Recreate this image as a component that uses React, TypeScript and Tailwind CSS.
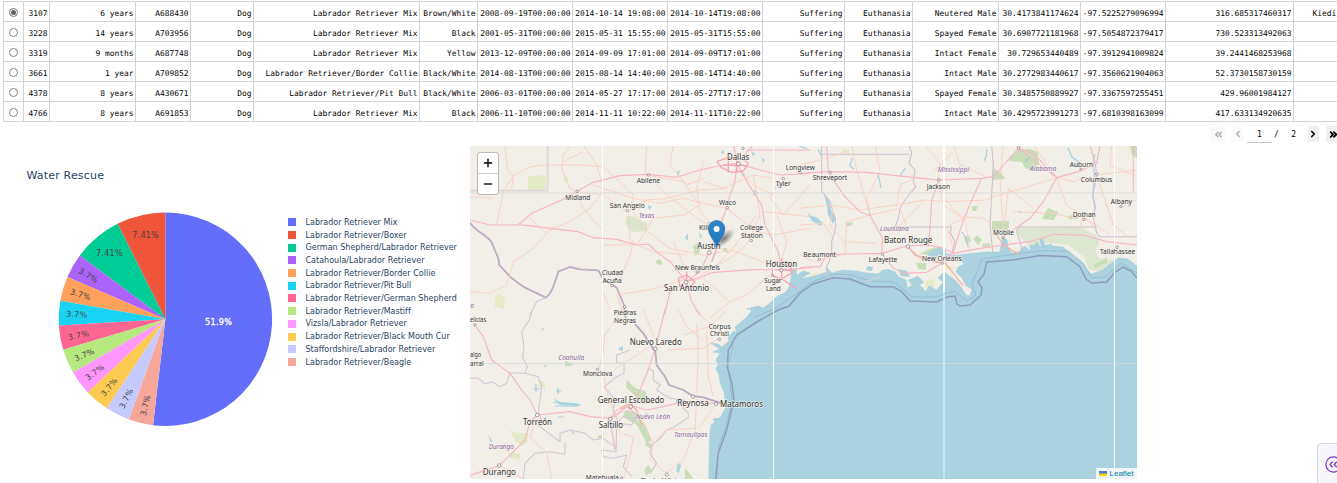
import React from "react";
import { ChevronLeft, ChevronRight, ChevronsLeft, ChevronsRight } from "lucide-react";

const ROWS: string[][] = [
  ["3107", "6 years", "A688430", "Dog", "Labrador Retriever Mix", "Brown/White", "2008-09-19T00:00:00", "2014-10-14 19:08:00", "2014-10-14T19:08:00", "Suffering", "Euthanasia", "Neutered Male", "30.4173841174624", "-97.5225279096994", "316.685317460317"],
  ["3228", "14 years", "A703956", "Dog", "Labrador Retriever Mix", "Black", "2001-05-31T00:00:00", "2015-05-31 15:55:00", "2015-05-31T15:55:00", "Suffering", "Euthanasia", "Spayed Female", "30.6907721181968", "-97.5054872379417", "730.523313492063"],
  ["3319", "9 months", "A687748", "Dog", "Labrador Retriever Mix", "Yellow", "2013-12-09T00:00:00", "2014-09-09 17:01:00", "2014-09-09T17:01:00", "Suffering", "Euthanasia", "Intact Female", "30.729653440489", "-97.3912941009824", "39.2441468253968"],
  ["3661", "1 year", "A709852", "Dog", "Labrador Retriever/Border Collie", "Black/White", "2014-08-13T00:00:00", "2015-08-14 14:40:00", "2015-08-14T14:40:00", "Suffering", "Euthanasia", "Intact Male", "30.2772983440617", "-97.3560621904063", "52.3730158730159"],
  ["4378", "8 years", "A430671", "Dog", "Labrador Retriever/Pit Bull", "Black/White", "2006-03-01T00:00:00", "2014-05-27 17:17:00", "2014-05-27T17:17:00", "Suffering", "Euthanasia", "Spayed Female", "30.3485750889927", "-97.3367597255451", "429.96001984127"],
  ["4766", "8 years", "A691853", "Dog", "Labrador Retriever Mix", "Black", "2006-11-10T00:00:00", "2014-11-11 10:22:00", "2014-11-11T10:22:00", "Suffering", "Euthanasia", "Intact Male", "30.4295723991273", "-97.6810398163099", "417.633134920635"],
];

type Slice = { name: string; color: string; share: number; label: string; x: number; y: number; rot: number };

const SLICES: Slice[] = [
  { name: "Labrador Retriever Mix", color: "#636efa", share: 14, label: "51.9%", x: 218.5, y: 322, rot: 0 },
  { name: "Labrador Retriever/Boxer", color: "#ef553b", share: 2, label: "7.41%", x: 145.5, y: 235.2, rot: 0 },
  { name: "German Shepherd/Labrador Retriever", color: "#00cc96", share: 2, label: "7.41%", x: 109.3, y: 253, rot: 0 },
  { name: "Catahoula/Labrador Retriever", color: "#ab63fa", share: 1, label: "3.7%", x: 88.2, y: 275.2, rot: 30 },
  { name: "Labrador Retriever/Border Collie", color: "#ffa15a", share: 1, label: "3.7%", x: 80.3, y: 294.3, rot: 16.7 },
  { name: "Labrador Retriever/Pit Bull", color: "#19d3f3", share: 1, label: "3.7%", x: 76.7, y: 314.2, rot: 3.3 },
  { name: "Labrador Retriever/German Shepherd", color: "#ff6692", share: 1, label: "3.7%", x: 78.3, y: 335.2, rot: -10 },
  { name: "Labrador Retriever/Mastiff", color: "#b6e880", share: 1, label: "3.7%", x: 84.3, y: 354.6, rot: -23.3 },
  { name: "Vizsla/Labrador Retriever", color: "#ff97ff", share: 1, label: "3.7%", x: 94.7, y: 372.2, rot: -36.7 },
  { name: "Labrador Retriever/Black Mouth Cur", color: "#fecb52", share: 1, label: "3.7%", x: 109, y: 387, rot: -50 },
  { name: "Staffordshire/Labrador Retriever", color: "#c5caff", share: 1, label: "3.7%", x: 126, y: 398.5, rot: -63.3 },
  { name: "Labrador Retriever/Beagle", color: "#f6a799", share: 1, label: "3.7%", x: 145.3, y: 405.3, rot: -76.7 },
];

const CX = 165.4;
const CY = 319.2;
const R = 106.7;

function wedge(from: number, to: number) {
  const p = (t: number) => {
    const a = (t / 27) * Math.PI * 2;
    return `${CX + R * Math.sin(a)} ${CY - R * Math.cos(a)}`;
  };
  return `M${CX} ${CY}L${p(from)}A${R} ${R} 0 ${to - from > 13.5 ? 1 : 0} 1 ${p(to)}Z`;
}

function Pie() {
  let edge = 27;
  return (
    <svg className="block h-[337px] w-[280px] shrink-0" viewBox="0 146 280 337" fontFamily="'DejaVu Sans', sans-serif">
      {SLICES.map((s, i) => {
        let d = "";
        if (i === 0) d = wedge(0, 14);
        else {
          d = wedge(edge - s.share, edge);
          edge -= s.share;
        }
        return <path key={s.name} d={d} fill={s.color} />;
      })}
      {SLICES.map((s, i) => {
        const w = i === 0 ? 26.8 : i < 3 ? 26.4 : 21;
        return (
          <text
            key={s.name}
            transform={`translate(${s.x} ${s.y}) rotate(${s.rot})`}
            x={-w / 2}
            y={2.9}
            fontSize="8"
            textLength={w}
            fill={i === 0 ? "#fff" : "#444"}
            stroke={i === 0 ? "#fff" : "none"}
            strokeWidth="0.3"
          >
            {s.label}
          </text>
        );
      })}
    </svg>
  );
}

type Place = [string, number, number, number, ("L" | "S" | "I")?];

const PLACES: Place[] = [
  ["Dallas", 727, 749.3, 160, "L"], ["Abilene", 636.7, 660, 182.5], ["Midland", 565.3, 590.3, 199.5],
  ["San Angelo", 609.7, 644.7, 208], ["Texas", 638.7, 654.3, 218, "I"], ["Waco", 719, 736, 205],
  ["Killeen", 699, 721, 230], ["College", 740, 763.3, 230], ["Station", 741, 762.7, 237.8],
  ["Austin", 697.3, 720.7, 249, "L"], ["New Braunfels", 675, 720, 269.8], ["San Antonio", 664, 709, 291.4, "L"],
  ["Houston", 765.7, 797, 267, "L"], ["Sugar", 764.3, 781.7, 283.3], ["Land", 766, 780.7, 290.8],
  ["Ciudad", 602, 623, 274.8], ["Acuña", 602.7, 621.7, 282.8], ["Piedras", 613.7, 636.3, 314.6],
  ["Negras", 614, 636, 322.6], ["Tyler", 775.7, 790.7, 186], ["Longview", 785.7, 815, 170.4],
  ["Shreveport", 812.7, 847.3, 180.4], ["Jackson", 926.7, 950, 188.8], ["Mississippi", 937.7, 969, 171.8, "I"],
  ["Alabama", 1030, 1056.3, 171.4, "I"], ["Auburn", 1069.7, 1093, 166.6], ["Columbus", 1080.7, 1112.3, 182.4],
  ["Albany", 1110.7, 1132, 204], ["Dothan", 1072.7, 1095.7, 216.5], ["Mobile", 993, 1014, 235.4],
  ["Louisiana", 880, 908.7, 231, "I"], ["Baton Rouge", 884, 932.3, 243, "L"], ["Lafayette", 868.7, 897.3, 262],
  ["New Orleans", 922, 961.7, 261], ["Beaumont", 803.3, 836, 256.6], ["Tallahassee", 1100, 1135.3, 254],
  ["elicias", 470, 486.3, 322.2], ["algo", 470, 481, 357.3], ["arral", 470, 483.5, 365.5],
  ["o", 470.2, 474, 308, "I"], ["Coahuila", 558.3, 584.3, 359.8, "I"], ["Monclova", 583, 612.3, 376.4],
  ["Nuevo Laredo", 629.7, 681.7, 345.2, "L"], ["Corpus", 708.7, 730.7, 328.8], ["Christi", 710, 729, 336.4],
  ["General Escobedo", 597.7, 664.3, 402.8, "L"], ["Reynosa", 677.3, 708.7, 406.2, "L"],
  ["Matamoros", 720, 763, 406.6, "L"], ["Nuevo León", 635.7, 670, 419, "I"], ["Saltillo", 598.7, 623, 428.4, "L"],
  ["Torreón", 523, 552, 424.6, "L"], ["Tamaulipas", 674, 707.3, 437, "I"], ["Durango", 488.7, 514, 448.6, "I"],
  ["Durango", 482.7, 516, 475, "L"], ["Matehuala", 585.7, 618.7, 480.4], ["Ciudad Victoria", 640, 690, 483],
];

const DOTS: [number, number, number][] = [
  [738.5, 163.8, 2], [648.5, 174.8, 1.4], [577.3, 191.3, 1.4], [627.3, 210.5, 1.4], [727.3, 207.7, 1.4],
  [709.5, 223.5, 1.4], [751.3, 240.5, 1.3], [709.3, 252.7, 2], [697.3, 272, 1.4], [686, 282.3, 2],
  [781.3, 270.3, 1.8], [773, 275.5, 1.2], [611.8, 285.5, 1.4], [624.7, 306.7, 1.4], [783.3, 178.6, 1.4],
  [800.3, 172.6, 1.4], [830.3, 172.3, 1.4], [938.7, 179.8, 1.4], [1018.5, 147.8, 1.4], [1081, 169.3, 1.3],
  [1096.7, 174, 1.4], [1121, 206.6, 1.3], [1084, 219.3, 1.4], [1003, 237.8, 1.3], [908, 246.5, 2],
  [882.5, 254.4, 1.3], [942.3, 263.2, 1.3], [819.3, 259.2, 1.4], [1117, 247.3, 1.4], [475, 325, 1.3],
  [597.5, 369.4, 1.3], [655.3, 348.8, 2], [719.3, 339.4, 1.3], [630.7, 406.7, 2], [693, 396.5, 1.8],
  [716.3, 404, 1.8], [610.3, 419, 2], [537.3, 415, 2], [499.3, 465.6, 2], [666.8, 474.7, 1.8], [743, 148.5, 1.3],
  [621.5, 478, 1.2],
];

const COAST =
  "M708.7 479L709.3 452 710 432 711 425 715 422 713 419 720 418 726 407 724 392 720 382 719 375 716 369 718 365 716 360 720 353 713 352 720 349 711 343 718 344 722 347 729 341 728 337 734 331 737 333 735 327 742 321 747 317 752 310 747 309 758 306 763 308 769 304 778 296 786 292 789 287 791 279 791 270 796 269 797 275 803 271 810 273 800 279 815 276 827 272 826 267 832 273 843 270 856 271 867 273 878 274 883 270 892 271 899 277 906 280 907 288 915 284 922 287 926 292 929 286 937 290 943 282 938 278 944 272 955 280 961 287 966 295 970 296 972 289 966 286 962 278 956 272 958 267 964 264 960 260 956 257 946 256 942 252 953 256 966 254 987 252 1000 252 1001 245 1003 237 1007 240 1008 248 1012 253 1019 252 1024 246 1030 250 1037 242 1040 247 1053 246 1063 247 1073 256 1083 263 1087 270 1091 274 1103 270 1110 264 1119 258 1128 259 1137 266V479Z";

function TexasMap() {
  return (
    <svg className="block h-full w-full" viewBox="470 146 667 333" fontFamily="'Noto Sans', sans-serif">
      <defs>
        <linearGradient id="pin" x1="0" x2="0" y1="0" y2="1">
          <stop offset="0" stopColor="#2e86cc" />
          <stop offset="1" stopColor="#2474b4" />
        </linearGradient>
        <radialGradient id="shade">
          <stop offset="0" stopColor="#000" stopOpacity=".5" />
          <stop offset="1" stopColor="#000" stopOpacity="0" />
        </radialGradient>
      </defs>
      <rect x="470" y="146" width="667" height="333" fill="#f2efe9" />

      {/* forests and parks */}
      <g fill="#b7d7a5" opacity=".7">
        <path d="M1010 158l8-8 12-1 8 3 1 11-5 8-9-3-3-6-12-1zM993 168l8 5 4 6-13 1zM992 221h17v7l-4 4-13-2zM1048 208l10 4-4 8-12-1zM1070 215l9 2-2 2h-9zM972 206l6 0-2 5h-4zM1130 146h7v12l-5-3zM964 237l5-2 2 6-5 2zM973 239l4-4 5 5-4 5zM982 244l8-1v5l-7-1zM916 263l10 0 0 7-8-1zM932 248l9-1-2 7-4 7-6-6-10-1zM627 380l8 8 10 3 4 9-4 4-10-8-9-9zM625 410l12 3 9 13 6 15-6 1-9-17-14-8zM644 470l4-5 4 5-6 6zM685 468l5 6 4 6h-9zM655 261l5-2 3 5-5 1zM1093 265l9-4 5-4 0 6-12 5zM565 361l8 3-2 2h-6zM693 246l7-4 0 10-5 4zM723 248l4 0 1 5-5-2zM598 436l4-1 0 4-4 0zM645 440l6 4 1 5-6-3zM846 223l7-1-2 4-4 0z" />
        <path d="M627 216l9 1 7 5 4 0v9l-16 1-6-9z" opacity=".6" />
        <path d="M1018 228l62-1 16 8 3 8-4 7 4 8 12 2 7-3 6 4-21 10-14-1-5-13-16-12-19-2-19 4-8-8-5-7z" opacity=".5" />
      </g>
      <g fill="#dfe8b4" opacity=".65">
        <path d="M528 175l6 1 12-1v15h-18zM495 296l5-3 5 6-1 10-9-2zM510 430l8 3 10 0 0 8-5 5-8-4zM508 452l12 2 0 6-10-2zM563 177l4-1 2 6-5 0z" />
        <path d="M930 279l5 1-1 8-8 3-1-9zM942 262l8 5 7 0-10 4zM808 275l12-3-5 4zM843 148l7 2-1 5-6-2zM540 380l5 2v8l-6-3z" />
      </g>

      {/* sea */}
      <path d={COAST} fill="#aad3df" stroke="#9fc9da" strokeWidth=".5" />
      <path d="M733 344L728 366 730 383 732 400 727 424 719 446 715 479" fill="none" stroke="#94bdcf" strokeWidth="1" />
      <path d="M755 317L774 309 793 296 812 282 833 274 851 275 871 281 894 282 912 297 936 297 955 291 967 301 976 295 972 284 982 259 1008 255 1040 251 1068 251 1083 263 1092 278 1105 277 1121 263 1137 273" fill="none" stroke="#8fb8cd" strokeWidth=".8" />
      <g fill="#aad3df">
        <path d="M930 252l9-5 7 4 0 6-8-2-4 4-7-4zM824 194l5 7 2 9 5 8-3 6-5-9-1-9zM807 212l4 4 5 1 7 6-2 3-9-5zM868 266l5 1-1 4-6-1zM880 271l8-2 8 3 2 5-10-1zM898 269l9 2 3 6-9-1zM1029 245l12 1-2-8 4 1 2 6 7-1v4l-22 1zM908 280l10-4 6 6-9 8zM777 183l1 6 4-3zM754 190l-1 6 6-3zM699 232l1 6 2-1zM688 233l-3 5 3 3zM676 399l5-1 0 4-5 1zM619 348l4-2 0 5-4-1zM553 398l7 4 12 1 8 1v2l-20-1zM645 412l2 6 2-3zM678 463l3 2-2 8-3-2zM488 435l4 6-1 2zM678 177l-1-5 3-2zM762 158l3 2-2 3zM751 151l2 5 2-2zM741 172l4 2-2 3zM723 149l-2 4 3 1zM648 205l4 2-3 3z" />
      </g>
      <g stroke="#9ccce0" strokeWidth="1.2" fill="none" opacity=".9">
        <path d="M536 384v8M534 389h6M558 388v6M556 391h5M553 402l8 1 16 1M555 406h22M558 417h6M544 366h3M543 328v2M597 400h4M571 430l3 4M799 146l8 3M818 149l4 8M852 158l-2 8 4 3M871 216l-3-8M878 174l3 14M905 168l-5 8M1068 148l4 9 7 5M1095 154l-2 10 2 16M1094 180l-1 17 3 12M984 161l2-4 1-8M1030 157l-5 5M962 232l4 6 2 9M1018 211l4 2" />
      </g>

      {/* state and national borders */}
      <g transform="translate(470 145) scale(.33333)" fill="none" stroke="#cdbdd0" strokeWidth="4" strokeLinejoin="round">
        <path d="M233 0V137H0" stroke="#dcd6d9" strokeWidth="5" />
        <path d="M0 233C20 262 48 268 65 292L85 340 88 360 125 400 158 424 190 440 228 458 240 445 250 425 265 380 300 366 330 373 385 376 400 402 440 428 462 480 467 520" stroke="#bfabc4" strokeWidth="5.5" />
        <path d="M228 458L200 470 180 510" strokeWidth="3" />
      </g>
      <g transform="translate(470 310) scale(.33333)" fill="none" stroke="#d2c5d5" strokeWidth="3.2" strokeLinejoin="round">
        <path d="M495 42L520 70 535 95 556 125 560 165 585 200 597 225 640 240 668 258 700 262 740 275 770 285" stroke="#b9a8c0" strokeWidth="5.5" />
        <path d="M186 0L178 30 155 65 162 110 158 140 172 170 165 190 205 200 215 230 205 310 215 330M165 190L120 188 110 220 90 230 65 215 45 222 25 205 0 205M190 335L230 365 270 395 270 370 300 360 345 370 370 390 400 385 420 400 438 412M160 507L165 460 195 430 240 425 285 433 285 398M480 120L440 135 440 158 462 160 462 190 440 200 403 230 435 270 430 300 445 340 485 345 495 325 460 320 440 340 438 425 395 420 400 440 430 445 470 435 460 470 485 500M533 175L550 182 550 210 570 225 560 240 600 265 640 270 640 295 655 310 655 322 615 350 590 360 570 385 545 405 540 430 560 460 540 490" />
      </g>
      <g transform="translate(800 145) scale(.33333)" fill="none" stroke="#cdbfd1" strokeWidth="3.2" strokeLinejoin="round">
        <path d="M65 0V138L90 170 106 225 108 245 95 290 95 330 80 365 85 400M65 28H328M327 0L335 25 327 55 345 75 340 110 347 125 315 165 300 190 295 220 286 244 300 246H455L450 262 465 290 457 320 472 350M575 0L580 60 570 240 578 320M668 325L660 290 650 260 655 246H885L890 262 897 275H1011M870 0L885 50 890 90 885 120 878 150 885 190 880 220 890 262" />
      </g>

      {/* minor roads */}
      <g transform="translate(470 145) scale(.33333)" fill="none" stroke="#fbcdbd" strokeWidth="2.6" strokeLinejoin="round">
        <path d="M105 0L112 75 130 92 180 66 225 60 340 60 398 65M130 92L100 140 80 240M0 155L70 160M130 92L125 130M275 70L300 130 320 140 340 190 400 260M275 70L280 30 300 0M398 65L450 110 490 150 480 200M340 0L380 60 398 120M320 140L400 150 470 200 530 165 590 160 690 135 770 130M370 120L490 160 570 175 640 160 700 175 770 190M525 90L530 0M530 90L610 165 690 225 740 255M490 200L520 250 600 310 700 330 760 320M475 200L480 290 550 320 650 330M398 140L360 190 300 230 225 262 170 210M255 240L190 310 130 350 110 420 60 445 0 440M398 300L500 300 550 220 640 210 690 180M610 0L600 60 650 120 700 100M700 50L680 130 690 200 720 230M770 190L820 230 860 260 910 270 1020 250M770 190L750 250 720 290M700 110L760 130 850 90 910 100M850 90L870 210 830 300 780 340 690 390M880 200L1020 215M740 310L800 320 900 360M650 410L700 400 780 470 830 450 900 390M780 470L720 520M650 400L560 430 440 450 460 500M640 360L610 290M700 400L790 310 860 210M398 440L420 490M490 285L480 335 450 400M690 180L640 110 530 90M930 100L900 160 940 210 1020 120M920 210L950 290 930 370M790 60L850 120 910 150M340 20L280 50" />
      </g>
      <g transform="translate(800 145) scale(.33333)" fill="none" stroke="#fbcdbd" strokeWidth="2.6" strokeLinejoin="round">
        <path d="M0 190L90 180 180 195 290 180 375 165 440 170 560 165 580 155M155 0L170 75 210 210M225 0L240 80 200 160 210 210 260 200 300 190M0 60L60 45 140 20M210 210L140 230 135 325M300 190L320 250 340 305M345 100L300 120 290 185M375 0L420 55 415 105 440 170 490 220 440 245 460 310M415 110L430 180 490 220M460 0L480 60 560 95M490 215L550 220 610 260M495 220L510 320M610 0L600 100 610 260M700 0L770 98 820 110 860 95M770 98L800 180 850 215 890 250M640 200L760 205 800 215 850 215 930 270M870 0L890 90 920 180 940 240 990 280M890 90L1011 75M935 0L930 60 1011 95M960 180L1011 165M850 215L830 275M580 155L700 120 770 98M375 165L300 240 240 300M0 240L70 235 100 280M0 330L40 350 140 325M100 185L90 240 130 290 230 295M700 40L655 0M610 265L625 130 700 190M200 410L240 395M460 20L400 80" />
      </g>
      <g transform="translate(470 310) scale(.33333)" fill="none" stroke="#fbcdbd" strokeWidth="2.6" strokeLinejoin="round">
        <path d="M455 0L405 75 398 140 385 180M398 190L415 260 430 300M520 0L560 100M590 120L700 115 745 85M640 75L720 50 770 0M680 40L685 120 680 250M710 60L715 200 730 260M625 0L650 50 700 90M200 330L180 380 230 430 245 507M440 320L450 370 490 380 480 440 460 507M520 340L550 400 540 450 590 490M680 265L675 360 640 450 590 490M735 285L690 350M550 400L590 360 680 355M0 500L90 467 160 507M480 300L440 310 420 330M675 0L720 40M540 110L430 180M515 345L490 305" />
      </g>

      {/* motorways */}
      <g transform="translate(470 145) scale(.33333)" fill="none" stroke="#f6b6c6" strokeWidth="3.4" strokeLinejoin="round">
        <path d="M0 225L60 240H145L185 205 275 165 322 138 370 112 450 92 535 88 620 97 690 75 760 60 800 55M145 238L240 250 325 260 370 278 440 283 500 300 535 297 565 325 600 350 650 410M800 55L795 110 780 150 770 190 750 240 718 320 690 380 650 410 600 440 583 510M650 410L730 382 850 374 935 375 1020 368M935 375L925 320 885 240 875 180 840 125 800 55 870 75 930 90 1020 85M800 55L850 0M790 0L805 60M830 15H1020M650 410L665 470 690 510" />
        <path d="M740 50L775 38 815 40 835 55 820 78 785 82 755 68 740 50M800 30V85M775 38V82M760 60L830 62M915 350L955 352 968 382 935 402 905 392 915 350M935 340V402L980 430M905 370L970 378M625 400L650 390 675 410 655 430 630 425 625 400M650 380V440M705 310L740 312 725 350" stroke="#f4a5b5" strokeWidth="4" />
      </g>
      <g transform="translate(800 145) scale(.33333)" fill="none" stroke="#f6b6c6" strokeWidth="3.4" strokeLinejoin="round">
        <path d="M0 85L85 80 200 82 345 98 415 105 545 100 580 95 655 10M80 0L85 80 130 150 180 200 210 212 248 280 245 325M415 105L395 170 390 250 385 305M545 100L520 155 490 225 460 320 425 355M655 10L770 98 730 170 690 220 610 275M0 368L60 365 80 330 140 327 245 325 320 303 380 300 425 308 460 325 540 310 610 300 690 290 760 268 850 270 920 290 1011 300M245 325L280 370 310 385 380 382 425 355M320 303L350 330 425 355M655 10L700 25 770 98M770 98L835 80 890 55 900 0M1000 0V140" />
        <path d="M325 305L345 330 375 345M400 350L435 353 490 423M590 270L610 300 660 330" stroke="#f6b3a6" strokeWidth="4" />
      </g>
      <g transform="translate(470 310) scale(.33333)" fill="none" stroke="#f6b6c6" strokeWidth="3.4" strokeLinejoin="round">
        <path d="M585 0L556 115 535 180 510 240 485 288 440 300 420 325 360 320 300 305 202 315 180 335 165 390 88 467 0 495M12 42L40 80 65 150 120 190 155 240 180 270 202 315M485 288L530 300 580 290 640 275 735 280M420 325L440 315 470 290 520 330M420 325L435 420" />
        <path d="M450 295L480 280 500 300 515 345" stroke="#f6b0a4" strokeWidth="4" />
      </g>

      {/* territorial waters */}
      <path d="M716 479L718.3 453 726.7 430 734 400 731.7 383 727.3 367 728.3 350 736.7 335 756.7 322 778 310 789 306 800 293 813 284 833 277.7 850 279 870 286.7 893 286.7 901 291 910 301 936.7 302 947 297 955 296 957 304 960 306 970 305 981 295 982 288 978 282 984 274 986.7 262 1013 260 1040 255.5 1066.7 256.7 1080 266.7 1086 279 1092 283 1106.7 282 1115 272 1123 267 1131 271 1137 278" fill="none" stroke="#8e9cbe" strokeWidth="1.5" />

      {/* tile seams */}
      <g>
        <rect x="602" y="146" width="1" height="333" fill="#fff" />
        <rect x="773" y="146" width="1" height="333" fill="#fff" opacity=".9" />
        <rect x="943" y="146" width="2" height="146" fill="#fff" opacity=".9" />
        <rect x="943" y="292" width="2" height="187" fill="#bfeafb" />
        <rect x="1114" y="146" width="1" height="333" fill="#fff" />
        <rect x="470" y="192" width="667" height="1.6" fill="#dadada" opacity=".5" />
        <rect x="470" y="363" width="667" height="1" fill="#d3d9d9" opacity=".8" />
      </g>

      {DOTS.map(([x, y, r]) => (
        <circle key={`${x}-${y}`} cx={x} cy={y} r={r * 0.9} fill="#fff" stroke="#7d7777" strokeWidth=".7" />
      ))}
      {PLACES.map(([name, x1, x2, y, kind]) => (
        <text
          key={`${name}${y}`}
          x={x1}
          y={y}
          textLength={x2 - x1}
          lengthAdjust="spacingAndGlyphs"
          fontSize={kind === "L" ? 8 : 7}
          fontStyle={kind === "I" ? "italic" : "normal"}
          fill={kind === "I" ? "#8d6a9c" : "#333"}
          stroke="#f7f5f1"
          strokeOpacity=".75"
          strokeWidth="1.4"
          paintOrder="stroke"
        >
          {name}
        </text>
      ))}

      <ellipse cx="724" cy="238.5" rx="13" ry="6" fill="url(#shade)" transform="rotate(-40 724 238.5)" />
      <path d="M716.6 247.2C714.8 240.5 708.5 236 708.5 228.7A8.2 8.2 0 0 1 724.9 228.7C724.9 236 718.5 240.5 716.6 247.2Z" fill="url(#pin)" stroke="#2a76b0" strokeWidth=".6" />
      <circle cx="716.6" cy="229" r="3" fill="#fff" />
    </svg>
  );
}

const CELL =
  "flex h-full items-center justify-end overflow-hidden whitespace-pre border-l border-[#d3d3d3] pr-[1.6px] pt-[4px]";

function DataTable() {
  return (
    <div className="w-[1400px] shrink-0 pl-[3px] pt-px font-['DejaVu_Sans_Mono',monospace] text-[7.9px] leading-[15px] text-black">
      <div className="border-t border-[#d3d3d3]">
        {ROWS.map((row, r) => (
          <div
            key={row[0]}
            className="grid h-[20px] grid-cols-[20px_26px_86px_55px_63px_166px_58px_95px_95px_95px_82px_68px_86px_82px_85px_128px_100px] border-b border-[#d3d3d3]"
          >
            <div className="flex h-full justify-center border-l border-[#d3d3d3] pt-[6px]">
              <span className={`flex size-[9px] items-center justify-center rounded-full border bg-white ${r === 0 ? "border-[#757575]" : "border-[#858585]"}`}>
                {r === 0 && <span className="size-[5px] rounded-full bg-[#666]" />}
              </span>
            </div>
            {row.map((value, c) => (
              <div key={c} className={CELL}>
                {value}
              </div>
            ))}
            <div className="flex h-full items-center whitespace-pre border-l border-[#d3d3d3] pl-[18.5px] pt-[4px]">
              {r === 0 ? "Kiedi" : ""}
            </div>
          </div>
        ))}
      </div>
    </div>
  );
}

function Pager() {
  return (
    <div className="flex h-[24px] w-[1345px] shrink-0 items-start pl-[1211px] pt-[4px] font-['DejaVu_Sans_Mono',monospace] text-[8px] text-black">
      <button className="flex h-[16px] w-[15px] items-center justify-center bg-[#fafafa] text-[#a8a8a8]"><ChevronsLeft size={11} strokeWidth={3} /></button>
      <button className="ml-[5px] flex h-[16px] w-[12px] items-center justify-center bg-[#fafafa] pl-px text-[#a8a8a8]"><ChevronLeft size={10} strokeWidth={3} /></button>
      <div className="ml-[4px] flex h-[17px] w-[25px] items-center justify-center border-b border-[#c8c8c8] pt-[2px]">1</div>
      <span className="ml-[2px] flex h-[17px] items-center">/</span>
      <span className="ml-[12.5px] flex h-[17px] items-center">2</span>
      <button className="ml-[11.5px] flex h-[16px] w-[11px] items-center justify-center bg-[#efefef]"><ChevronRight size={10} strokeWidth={4} /></button>
      <button className="ml-[7px] flex h-[16px] w-[15px] items-center justify-center bg-[#efefef]"><ChevronsRight size={11} strokeWidth={4} /></button>
    </div>
  );
}

export default function App() {
  return (
    <div className="relative flex h-[483px] w-full flex-col overflow-hidden bg-white">
      <DataTable />
      <Pager />
      <div className="flex h-[337px] items-start">
        <section className="relative flex h-[337px] w-[470px] shrink-0">
          <h2 className="absolute left-[26.5px] top-[22px] whitespace-nowrap font-['DejaVu_Sans',sans-serif] text-[11px] leading-[16px] tracking-[0.18px] text-[#2a3f5f]">
            Water Rescue
          </h2>
          <Pie />
          <ul className="pl-[8px] pt-[70px] font-['DejaVu_Sans',sans-serif] text-[8px] tracking-[0.02px] text-[#2a3f5f]">
            {SLICES.map((s) => (
              <li key={s.name} className="flex h-[12.7px] items-center whitespace-nowrap">
                <svg className="mr-[9.5px] size-[8px] shrink-0" viewBox="0 0 8 8">
                  <rect width="8" height="8" fill={s.color} />
                </svg>
                <span className="pt-[1.2px]">{s.name}</span>
              </li>
            ))}
          </ul>
        </section>
        <section className="relative h-[333px] w-[667px] shrink-0 overflow-hidden">
          <TexasMap />
          <div className="absolute left-[7px] top-[6px] flex w-[22px] flex-col rounded-[3px] border border-[#bdbab6] bg-white text-black">
            <button className="flex h-[21px] items-center justify-center border-b border-[#ccc]">
              <svg className="size-[10px]" viewBox="0 0 10 10" stroke="currentColor" strokeWidth="1.4"><path d="M.8 5h8.4M5 .8v8.4" /></svg>
            </button>
            <button className="flex h-[20px] items-center justify-center">
              <svg className="size-[10px]" viewBox="0 0 10 10" stroke="currentColor" strokeWidth="1.3"><path d="M.8 5h8.4" /></svg>
            </button>
          </div>
          <div className="absolute bottom-0 right-0 flex h-[11px] w-[41px] items-center bg-white/80 pl-[3px] font-['Liberation_Sans',sans-serif] text-[8px] leading-[11px] text-[#0078a8]">
            <svg className="mr-[2.5px] h-[5px] w-[8px]" viewBox="0 0 8 5">
              <rect width="8" height="3" fill="#4c7be1" />
              <rect y="2.6" width="8" height="2.4" fill="#ffd500" />
            </svg>
            Leaflet
          </div>
        </section>
      </div>
      <button className="absolute left-[1317px] top-[443px] flex h-[44px] w-[30px] items-start rounded-tl-[4px] border border-[#d5d5e5] bg-[#f5f5fb] pl-[7px] pt-[12px] text-[#7b3fc4]">
        <svg className="size-[17px] shrink-0" viewBox="0 0 17 17" fill="none" stroke="currentColor" strokeWidth="1.3">
          <circle cx="8.5" cy="8.5" r="7.6" />
          <path d="M7.6 5.7L5 8.5l2.6 2.8M11.8 5.7L9.2 8.5l2.6 2.8" />
        </svg>
      </button>
    </div>
  );
}
